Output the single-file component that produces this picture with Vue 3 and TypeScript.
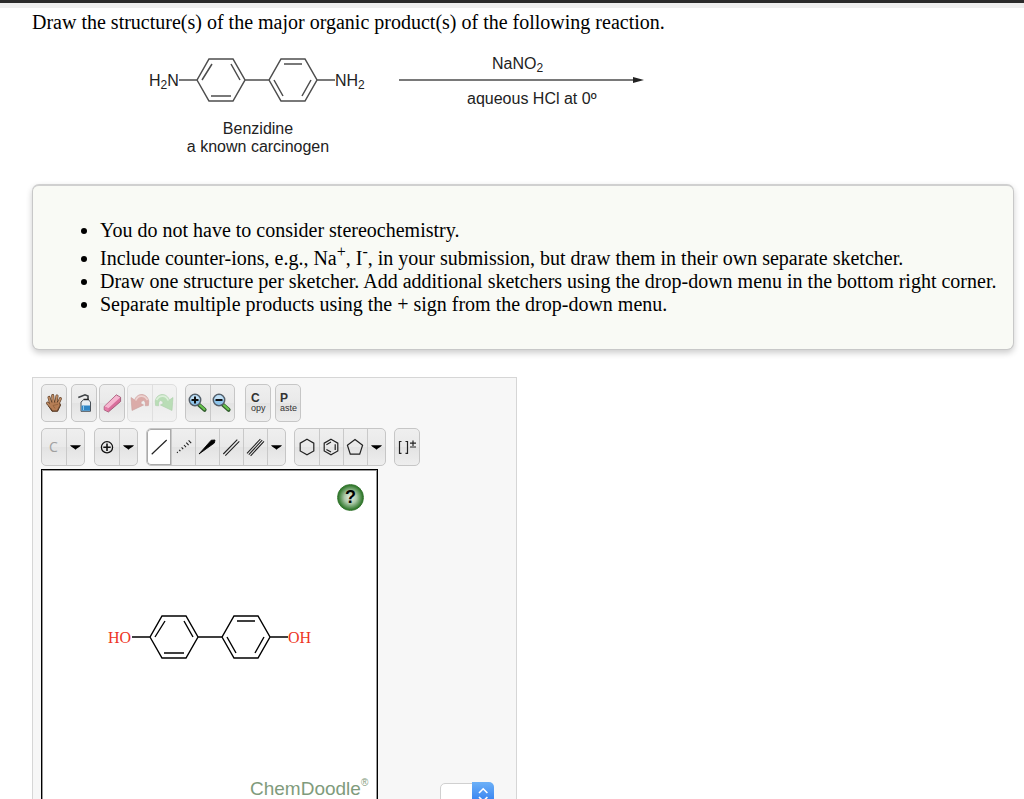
<script setup lang="ts">
interface Tool {
  id: string
  label: string
  kind?: 'drop' | 'active'
}
interface ToolGroup {
  tools: Tool[]
  gap: 'g2' | 'g4' | 'g8' | 'g9' | 'g10'
  disabled?: boolean
}

const rows: ToolGroup[][] = [
  [
    { gap: 'g4', tools: [{ id: 'move', label: 'Move' }] },
    { gap: 'g2', tools: [{ id: 'clear', label: 'Clear' }] },
    { gap: 'g2', tools: [{ id: 'erase', label: 'Erase' }] },
    { gap: 'g8', disabled: true, tools: [{ id: 'undo', label: 'Undo' }, { id: 'redo', label: 'Redo' }] },
    { gap: 'g10', tools: [{ id: 'zoomin', label: 'Zoom in' }, { id: 'zoomout', label: 'Zoom out' }] },
    { gap: 'g4', tools: [{ id: 'copy', label: 'Copy' }] },
    { gap: 'g4', tools: [{ id: 'paste', label: 'Paste' }] },
  ],
  [
    { gap: 'g9', tools: [{ id: 'carbon', label: 'Carbon' }, { id: 'drop', label: 'More elements', kind: 'drop' }] },
    { gap: 'g8', tools: [{ id: 'charge', label: 'Increase charge' }, { id: 'drop', label: 'More charges', kind: 'drop' }] },
    {
      gap: 'g8',
      tools: [
        { id: 'single', label: 'Single bond', kind: 'active' },
        { id: 'recessed', label: 'Recessed bond' },
        { id: 'wedge', label: 'Protruding bond' },
        { id: 'double', label: 'Double bond' },
        { id: 'triple', label: 'Triple bond' },
        { id: 'drop', label: 'More bonds', kind: 'drop' },
      ],
    },
    {
      gap: 'g8',
      tools: [
        { id: 'hexane', label: 'Cyclohexane ring' },
        { id: 'benzene', label: 'Benzene ring' },
        { id: 'pentane', label: 'Cyclopentane ring' },
        { id: 'drop', label: 'More rings', kind: 'drop' },
      ],
    },
    { gap: 'g8', tools: [{ id: 'bracket', label: 'Bracket with charge' }] },
  ],
]

// Two para-linked benzene rings, centred on the bond that joins them.
const biphenyl =
  'M-78 0H-60L-48-21H-24L-12 0L-24 21H-48L-60 0M-12 0H12L24-21H48L60 0L48 21H24L12 0M60 0H78' +
  'M-55 0L-45-16M-26-16L-17 0M-46 16H-26M27-16H45M17 0L26 16M45 16L54 0'
</script>

<template>
  <div class="page">
    <div class="topbar"></div>
    <main>
      <h1>Draw the structure(s) of the major organic product(s) of the following reaction.</h1>

      <svg class="reaction" viewBox="0 0 640 120" role="img" aria-label="Benzidine with sodium nitrite in aqueous HCl">
        <path :d="biphenyl" transform="translate(225 36)" fill="none" stroke="#4d4d4d" stroke-width="1.5" />
        <path d="M367 36H604" stroke="#4d4d4d" stroke-width="1.5" />
        <path d="M601 33L612 36L601 39Z" fill="#222" />
        <g class="label">
          <text x="117" y="42">H<tspan font-size="12" dy="3">2</tspan><tspan dy="-3">N</tspan></text>
          <text x="303" y="42">NH<tspan font-size="12" dy="3">2</tspan></text>
          <text x="226" y="90" text-anchor="middle">Benzidine</text>
          <text x="226" y="108" text-anchor="middle">a known carcinogen</text>
          <text x="460" y="25">NaNO<tspan font-size="12" dy="3">2</tspan></text>
          <text x="435" y="60">aqueous HCl at 0º</text>
        </g>
      </svg>

      <section class="notes">
        <ul>
          <li>You do not have to consider stereochemistry.</li>
          <li>Include counter-ions, e.g., Na<sup>+</sup>, I<sup>-</sup>, in your submission, but draw them in their own separate sketcher.</li>
          <li>Draw one structure per sketcher. Add additional sketchers using the drop-down menu in the bottom right corner.</li>
          <li>Separate multiple products using the + sign from the drop-down menu.</li>
        </ul>
      </section>

      <section class="sketcher">
        <div v-for="(row, r) in rows" :key="r" class="toolbar">
          <div v-for="(group, g) in row" :key="g" class="group" :class="[group.gap, { disabled: group.disabled }]">
            <button
              v-for="tool in group.tools"
              :key="tool.id"
              type="button"
              :class="tool.kind"
              :aria-label="tool.label"
              :disabled="group.disabled"
            >
              <svg v-if="tool.id === 'drop'" width="18" height="36" viewBox="0 0 18 36">
                <path d="M4 16.3H15C14 18 11 19 9.5 20.7C8 19 5 18 4 16.3Z" fill="#000" />
              </svg>
              <svg v-else width="24" height="36" viewBox="0 0 24 36" fill="none">
                <g v-if="tool.id === 'move'">
                  <g stroke="#5d3e27" stroke-width="3" stroke-linecap="round">
                    <path d="M8.6 18L7 12.4M11.2 17L10.7 10.6M14 17L15 11M16.2 18.5L18.4 13.6M9 22L5.6 18.2" />
                  </g>
                  <path d="M7.3 17H17L18.6 20L15.6 26.3H10L6.6 21Z" fill="#5d3e27" stroke="#5d3e27" />
                  <g stroke="#bd8961" stroke-width="1.8" stroke-linecap="round">
                    <path d="M8.6 18L7 12.4M11.2 17L10.7 10.6M14 17L15 11M16.2 18.5L18.4 13.6M9 22L5.6 18.2" />
                  </g>
                  <path d="M8 17.5H16.8L17.8 20L15 25.5H10.6L7.6 21Z" fill="#b57d54" />
                  <path d="M11 20.5L16 19.3M11 20.5L13 23.5" stroke="#8b5b38" stroke-width=".7" />
                </g>
                <g v-else-if="tool.id === 'clear'">
                  <path d="M6.3 12.6L13 9.8L16 11V15" stroke="#3f4346" stroke-width="1.6" />
                  <path d="M9 26.3V17L11.5 14.8H16.5L18.5 17V26.3Z" fill="#e8eef2" stroke="#4a5259" />
                  <path d="M9.5 20.5H18V25.8H9.5Z" fill="#2f86c5" />
                  <path d="M11.5 20.5V25" stroke="#8dc9ed" />
                  <path d="M11.6 14.4H16.7" stroke="#222" stroke-width="1.2" />
                </g>
                <g v-else-if="tool.id === 'erase'">
                  <path d="M4.2 21.5L16.3 9.8L20.6 12.3V16.5L8.4 27L4.2 24.9Z" fill="#d96e9c" stroke="#8d4560" stroke-width=".7" />
                  <path d="M4.5 21.6L16.3 10.2L20.2 12.5L8.4 23.3Z" fill="#f5b7d0" />
                  <path d="M8.4 23.3V26.6L4.5 24.7V21.6Z" fill="#e57da8" />
                </g>
                <g v-else-if="tool.id === 'undo'">
                  <path d="M3 12.5L6.7 15C9 7.5 19 7.5 20.8 16L20.4 20.6L17.3 20.8C18.2 14.5 14 14.2 12.8 18.4L15.6 20L4 25.5Z" fill="#c0625c" stroke="#a04a45" stroke-width=".6" />
                  <path d="M7.7 15.5C10 9.8 16.5 9.8 19.5 15" stroke="#e5b0ac" stroke-width="1.6" />
                </g>
                <g v-else-if="tool.id === 'redo'">
                  <path d="M21 12.5L17.3 15C15 7.5 5 7.5 3.2 16L3.6 20.6L6.7 20.8C5.8 14.5 10 14.2 11.2 18.4L8.4 20L20 25.5Z" fill="#7cc477" stroke="#63a85f" stroke-width=".6" />
                  <path d="M16.3 15.5C14 9.8 7.5 9.8 4.5 15" stroke="#c3e8bf" stroke-width="1.6" />
                </g>
                <g v-else-if="tool.id === 'zoomin' || tool.id === 'zoomout'">
                  <path d="M12.6 19.4L18.6 24.8" stroke="#315d2d" stroke-width="4" stroke-linecap="round" />
                  <path d="M14 20.3L18.4 24.2" stroke="#69c44f" stroke-width="2.2" stroke-linecap="round" />
                  <circle cx="9" cy="15" r="5.7" fill="#8ec5ec" stroke="#555f69" stroke-width="1.5" />
                  <path d="M4.3 15A4.7 4.7 0 0 1 13.7 15Z" fill="#c2e0f5" />
                  <path d="M5.5 15H12.5" stroke="#111" stroke-width="2" />
                  <path v-if="tool.id === 'zoomin'" d="M9 11.5V18.5" stroke="#111" stroke-width="2" />
                </g>
                <g v-else-if="tool.id === 'copy'" class="word">
                  <text x="5" y="17" class="cap">C</text>
                  <text x="5" y="26">opy</text>
                </g>
                <g v-else-if="tool.id === 'paste'" class="word">
                  <text x="4" y="17" class="cap">P</text>
                  <text x="4" y="26">aste</text>
                </g>
                <text v-else-if="tool.id === 'carbon'" x="7" y="23" class="carbon">C</text>
                <g v-else-if="tool.id === 'charge'" stroke="#111" stroke-width="1.3">
                  <circle cx="12" cy="18.3" r="5.6" />
                  <path d="M8.3 18.3H15.7M12 14.6V22" stroke-width="1.6" />
                </g>
                <path v-else-if="tool.id === 'single'" d="M4.7 25.3L19.7 11" stroke="#222" stroke-width="1.2" />
                <path
                  v-else-if="tool.id === 'recessed'"
                  d="M6 23L6.8 23.8M8.2 20.8L9.4 22.2M10.6 18.4L12.2 20.2M13 16L15 18.2M15.3 13.6L17.6 16.2M17.6 11.4L20.2 14.2"
                  stroke="#222"
                  stroke-width="1.1"
                />
                <path v-else-if="tool.id === 'wedge'" d="M4 25L16.2 11.2L20 11L19.4 14Z" fill="#000" stroke="#000" stroke-width=".8" stroke-linejoin="round" />
                <path v-else-if="tool.id === 'double'" d="M4.3 25L18.3 10.7M6.3 26.6L20.3 12.3" stroke="#222" stroke-width="1.1" />
                <path v-else-if="tool.id === 'triple'" d="M4 24.4L17.4 10M5.8 25.6L19.2 11.2M7.6 26.8L21 12.4" stroke="#222" stroke-width="1.1" />
                <path v-else-if="tool.id === 'hexane'" d="M12 10.3L18.8 14.2V21.9L12 25.8L5.2 21.9V14.2Z" stroke="#222" stroke-width="1.2" />
                <g v-else-if="tool.id === 'benzene'" stroke="#222" stroke-width="1.2">
                  <path d="M12 10.3L18.8 14.2V21.9L12 25.8L5.2 21.9V14.2Z" />
                  <path d="M16.2 15.2V20.9M12 13L7.4 15.7M12 23.1L7.4 20.4" />
                </g>
                <path v-else-if="tool.id === 'pentane'" d="M12 10.6L19.6 16.2L16.7 25.2H7.3L4.4 16.2Z" stroke="#222" stroke-width="1.2" />
                <g v-else-if="tool.id === 'bracket'" stroke="#222" stroke-width="1.2">
                  <path d="M6.5 12.5H4.5V24.3H6.5M10.5 12.5H12.5V24.3H10.5" />
                  <path d="M15 14.2H21M18 11.4V17M15 18H21" />
                </g>
              </svg>
            </button>
          </div>
        </div>

        <div class="workspace">
          <div class="canvas">
            <svg viewBox="0 0 333 333" role="img" aria-label="Biphenyl-4,4'-diol">
              <path :d="biphenyl" transform="translate(167 166)" fill="none" stroke="#000" stroke-width="1.4" />
              <text x="65" y="172" class="oxygen">HO</text>
              <text x="245" y="172" class="oxygen">OH</text>
              <text x="207" y="324" class="brand">ChemDoodle<tspan font-size="10" dy="-9">®</tspan></text>
            </svg>
            <button type="button" class="help" aria-label="Help">?</button>
          </div>
          <div class="picker">
            <select aria-label="Add sketcher"><option></option></select>
            <svg width="22" height="24" viewBox="0 0 22 24" fill="none" stroke="#fff" stroke-width="1.6">
              <path d="M7 11L11.2 6.8L15.4 11M7 15L11.2 19.2L15.4 15" />
            </svg>
          </div>
        </div>
      </section>
    </main>
  </div>
</template>

<style>
body {
  margin: 0;
  background: #fff;
}
</style>

<style scoped>
.page {
  height: 100vh;
  overflow: hidden;
  font-family: "Liberation Serif", "Times New Roman", serif;
  font-size: 20px;
  line-height: 23px;
  color: #000;
}
.topbar {
  height: 3px;
  background: #2b2b2b;
  border-bottom: 5px solid #efefef;
}
main {
  padding: 3px 10px 0 32px;
}
h1 {
  margin: 0;
  font-size: 20px;
  font-weight: normal;
}
.reaction {
  display: block;
  width: 640px;
  max-width: 100%;
  margin-top: 10px;
}
.label {
  font: 16px "Liberation Sans", Arial, sans-serif;
  fill: #222;
}
.notes {
  margin-top: 20px;
  padding: 33px 10px 33px 11px;
  border: 1px solid #c8c8c8;
  border-top: 2px solid #d0d0d0;
  border-radius: 7px;
  background: #f9faf5;
  box-shadow: 0 3px 6px rgba(0, 0, 0, 0.2);
}
ul {
  margin: 0;
  padding-left: 56px;
}
sup {
  font-size: 16px;
  line-height: 19px;
}
.sketcher {
  box-sizing: border-box;
  width: 485px;
  max-width: 100%;
  margin-top: 27px;
  padding: 6px 8px 12px;
  border: 1px solid #d6d6d6;
  background: #f7f7f7;
}
.toolbar {
  display: flex;
  margin-bottom: 6px;
}
.group {
  display: flex;
  overflow: hidden;
  border: 1px solid #c6c6c6;
  border-radius: 5px;
  background: linear-gradient(#efefef, #e9e9e9 50%, #e3e3e3 51%, #eee);
}
.group.disabled {
  opacity: 0.5;
}
.g2 { margin-right: 2px; }
.g4 { margin-right: 4px; }
.g8 { margin-right: 8px; }
.g9 { margin-right: 9px; }
.g10 { margin-right: 10px; }
.group button {
  box-sizing: border-box;
  width: 24px;
  height: 36px;
  padding: 0;
  border: 0;
  background: none;
}
.group button.drop {
  width: 18px;
}
.group button + button {
  box-shadow: inset 1px 0 #c9c9c9;
}
.group button.active {
  background: #fff;
  box-shadow: inset 0 0 0 1px #aaa;
  border-radius: 4px 0 0 4px;
}
.group svg {
  display: block;
}
.word {
  font: 9px "Liberation Sans", Arial, sans-serif;
  fill: #333;
}
.cap {
  font-size: 12px;
  font-weight: bold;
}
.carbon {
  font: 14px "Open Sans", sans-serif;
  fill: #a0a0a0;
}
.workspace {
  display: flex;
  align-items: flex-end;
  gap: 62px;
  margin-top: -3px;
}
.canvas {
  position: relative;
  width: 333px;
  padding: 1px;
  border: 1px solid #000;
  background: #fff;
  box-shadow: inset 0 0 0 1px #999;
}
.canvas svg {
  display: block;
}
.oxygen {
  font: 16px "Liberation Serif", "Times New Roman", serif;
  fill: #ee3524;
}
.brand {
  font: 19px "Liberation Sans", Arial, sans-serif;
  fill: #7f9b7c;
}
.help {
  position: absolute;
  top: 14px;
  right: 13px;
  width: 27px;
  height: 27px;
  padding: 0;
  border: 1px solid #32742d;
  border-radius: 50%;
  background: radial-gradient(circle, #dfeadd 5%, #a9c6a6 35%, #357b30 68%);
  font: bold 18px/25px "Liberation Sans", Arial, sans-serif;
  color: #000;
}
.picker {
  position: relative;
  width: 54px;
  height: 24px;
}
.picker select {
  width: 100%;
  height: 100%;
  border: 1px solid #d0d0d0;
  border-radius: 5px;
  background: #fff;
  appearance: none;
}
.picker svg {
  position: absolute;
  top: 0;
  right: 0;
  border-radius: 0 5px 5px 0;
  background: linear-gradient(#6cb0f7, #2a78f0);
  pointer-events: none;
}
</style>
